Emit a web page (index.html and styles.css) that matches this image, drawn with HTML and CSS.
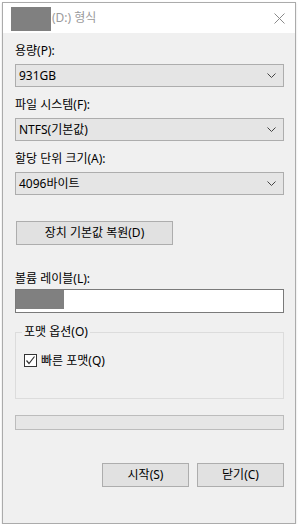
FILE: index.html
```html
<!DOCTYPE html>
<html lang="ko">
<head>
<meta charset="UTF-8">
<meta name="viewport" content="width=device-width, initial-scale=1.0">
<title>형식</title>
<link rel="stylesheet" href="styles.css">
</head>
<body>

<!-- Ventana de formato -->
<div class="window">
    <div class="title-bar">
        <span class="redacted title-redacted"></span>
        <span class="title-text">(D:) 형식</span>
        <svg class="close-icon" width="11" height="11" viewBox="0 0 11 11">
            <path d="M0.5 0.5 L10.5 10.5 M10.5 0.5 L0.5 10.5" stroke="#8a8a8a" stroke-width="1" fill="none"/>
        </svg>
    </div>

    <div class="content">
        <div class="label first">용량(P):</div>
        <div class="combo">
            <span>931GB</span>
            <svg class="chevron" width="9" height="5" viewBox="0 0 9 5"><path d="M0.5 0.5 L4.5 4.5 L8.5 0.5" stroke="#444" fill="none"/></svg>
        </div>

        <div class="label">파일 시스템(F):</div>
        <div class="combo">
            <span>NTFS(기본값)</span>
            <svg class="chevron" width="9" height="5" viewBox="0 0 9 5"><path d="M0.5 0.5 L4.5 4.5 L8.5 0.5" stroke="#444" fill="none"/></svg>
        </div>

        <div class="label">할당 단위 크기(A):</div>
        <div class="combo">
            <span>4096바이트</span>
            <svg class="chevron" width="9" height="5" viewBox="0 0 9 5"><path d="M0.5 0.5 L4.5 4.5 L8.5 0.5" stroke="#444" fill="none"/></svg>
        </div>

        <button class="btn restore-btn">장치 기본값 복원(D)</button>

        <div class="label volume-label">볼륨 레이블(L):</div>
        <div class="textbox"><span class="redacted text-redacted"></span></div>

        <fieldset class="group">
            <legend>포맷 옵션(O)</legend>
            <div class="check-row">
                <span class="checkbox">
                    <svg width="11" height="11" viewBox="0 0 11 11"><path d="M1.5 5.5 L4 8.5 L9.5 1.5" stroke="#333" stroke-width="1.2" fill="none"/></svg>
                </span>
                <span>빠른 포맷(Q)</span>
            </div>
        </fieldset>

        <div class="progress"></div>

        <div class="footer">
            <button class="btn footer-btn">시작(S)</button>
            <button class="btn footer-btn">닫기(C)</button>
        </div>
    </div>
</div>

</body>
</html>
```

FILE: styles.css
```css
/* Estilos generales */
body {
    margin: 0;
    background-color: #fff;
    font-family: "Noto Sans", "Noto Sans CJK KR", sans-serif;
    font-size: 12px;
    color: #000;
}

.window {
    margin: 2px 0 0 2px;
    width: 292px;
    height: 520px;
    border: 1px solid #ababab;
    background-color: #f0f0f0;
    box-shadow: 0 1px 2px rgba(0, 0, 0, 0.15);
    display: flex;
    flex-direction: column;
}

/* Barra de título */
.title-bar {
    height: 30px;
    background-color: #fff;
    display: flex;
    align-items: center;
    padding-left: 8px;
    padding-right: 10px;
}

.redacted {
    display: block;
    background-color: #808080;
}

.title-redacted {
    width: 40px;
    height: 24px;
    margin-top: 1px;
}

.title-text {
    color: #9a9a9a;
    margin-left: 1px;
    flex: 1;
    line-height: 16px;
}

.close-icon {
    margin-top: 1px;
}

/* Contenido */
.content {
    padding: 0 11px 0 12px;
}

.label {
    height: 17px;
    line-height: 17px;
    margin-top: 9px;
}

.combo {
    height: 21px;
    margin-top: 5px;
    border: 1px solid #adadad;
    background-color: #e5e5e5;
    display: flex;
    align-items: center;
    justify-content: space-between;
    padding: 0 7px 0 3px;
}

.combo span {
    line-height: 16px;
}

.label.first {
    margin-top: 9px;
}

.btn {
    font-family: inherit;
    font-size: 12px;
    color: #000;
    background-color: #e1e1e1;
    border: 1px solid #adadad;
    padding: 0;
    height: 24px;
    line-height: 16px;
}

.restore-btn {
    display: block;
    width: 157px;
    margin: 26px 0 0 1px;
}

.label.volume-label {
    margin-top: 25px;
}

.textbox {
    height: 22px;
    margin-top: 2px;
    border: 1px solid #7a7a7a;
    background-color: #fff;
}

.text-redacted {
    width: 48px;
    height: 19px;
}

/* Grupo de opciones */
.group {
    margin: 11px 0 0 0;
    padding: 0 8px 30px 8px;
    border: 1px solid #dcdcdc;
    min-width: 0;
}

.group legend {
    padding: 0 2px;
    margin-left: -2px;
    line-height: 16px;
}

.check-row {
    display: flex;
    align-items: center;
    height: 16px;
    margin-top: 12px;
    gap: 4px;
}

.checkbox {
    width: 11px;
    height: 11px;
    border: 1px solid #333;
    background-color: #fff;
    display: flex;
}

.progress {
    height: 13px;
    margin-top: 16px;
    border: 1px solid #bcbcbc;
    background-color: #e6e6e6;
}

.footer {
    display: flex;
    justify-content: flex-end;
    gap: 8px;
    margin-top: 33px;
}

.footer-btn {
    width: 87px;
}
```
